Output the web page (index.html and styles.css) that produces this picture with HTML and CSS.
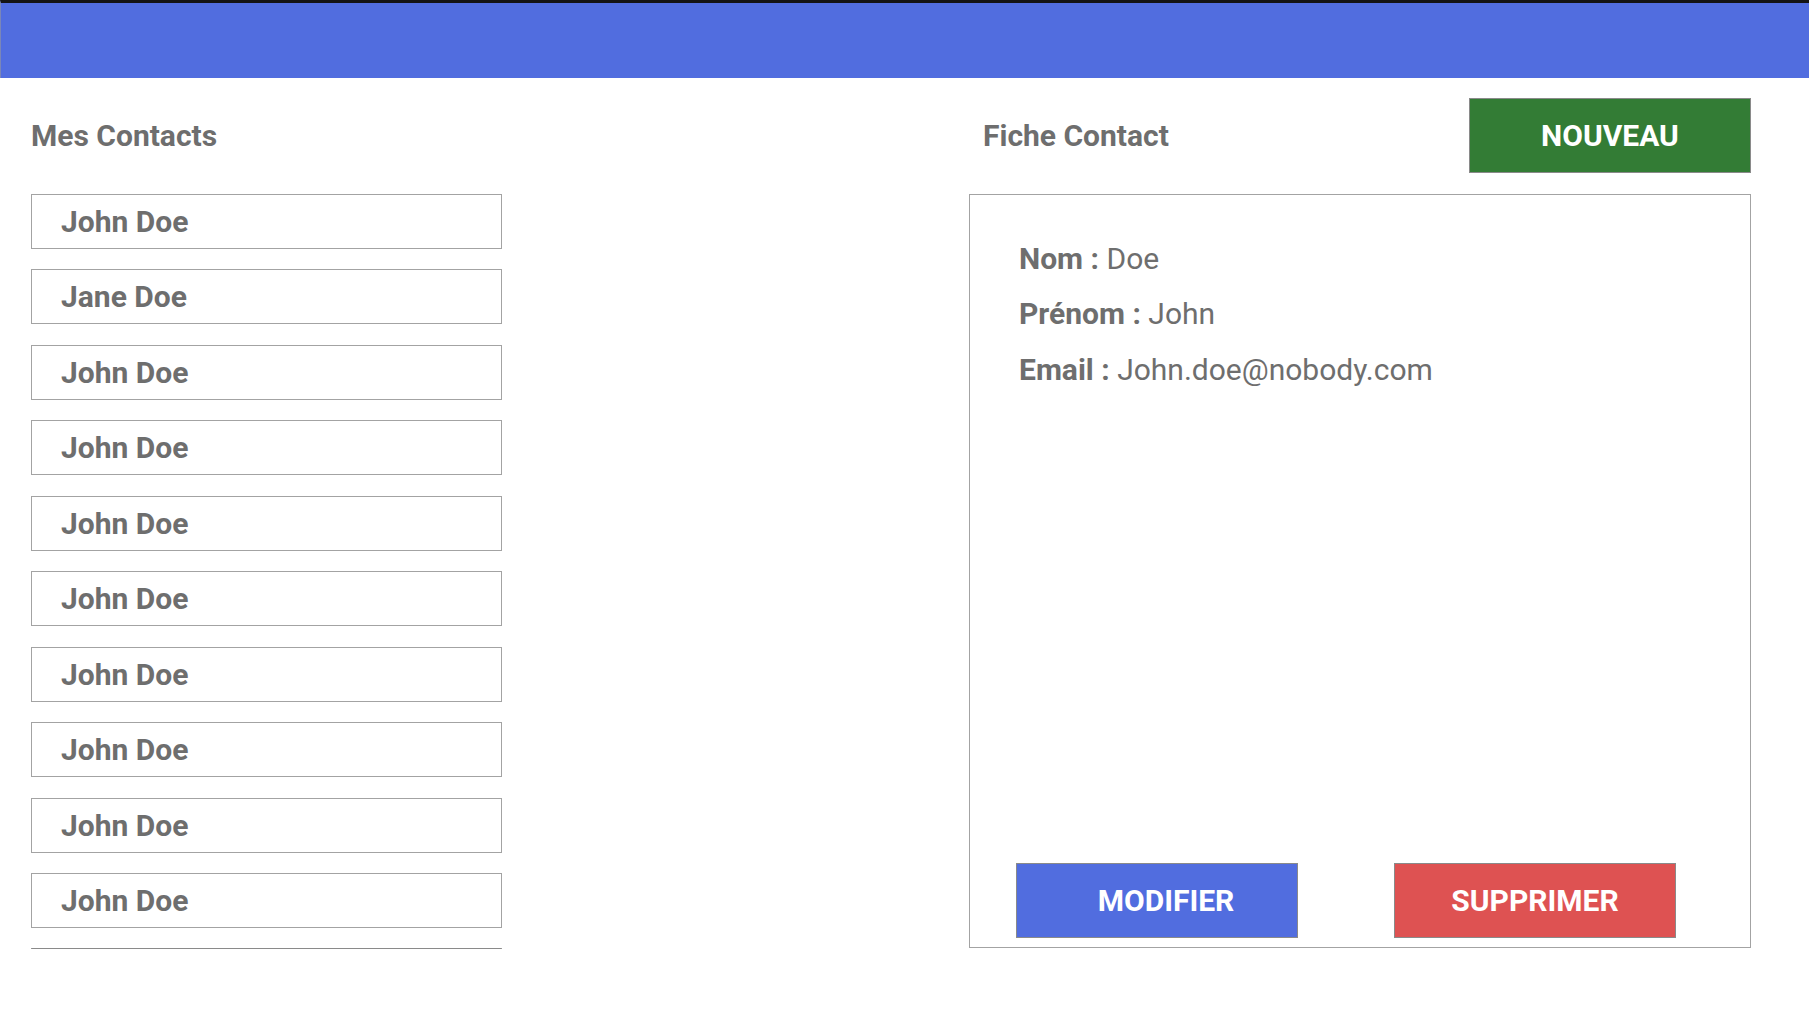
FILE: index.html
```html
<!DOCTYPE html>
<html lang="fr">
<head>
<meta charset="utf-8">
<title>Contacts</title>
<link rel="stylesheet" href="styles.css">
</head>
<body>
<header class="topbar"></header>
<main class="main">
  <section class="col-list">
    <div class="row-head">
      <h2 class="title">Mes Contacts</h2>
    </div>
    <ul class="contact-list">
      <li class="contact">John Doe</li>
      <li class="contact">Jane Doe</li>
      <li class="contact">John Doe</li>
      <li class="contact">John Doe</li>
      <li class="contact">John Doe</li>
      <li class="contact">John Doe</li>
      <li class="contact">John Doe</li>
      <li class="contact">John Doe</li>
      <li class="contact">John Doe</li>
      <li class="contact">John Doe</li>
      <li class="contact contact-next"></li>
    </ul>
  </section>
  <section class="col-detail">
    <div class="row-head detail-head">
      <h2 class="title">Fiche Contact</h2>
      <button class="btn btn-new">NOUVEAU</button>
    </div>
    <div class="card">
      <div class="fields">
        <p class="field"><b>Nom :</b> Doe</p>
        <p class="field"><b>Prénom :</b> John</p>
        <p class="field"><b>Email :</b> John.doe@nobody.com</p>
      </div>
      <div class="actions">
        <button class="btn btn-edit">MODIFIER</button>
        <button class="btn btn-delete">SUPPRIMER</button>
      </div>
    </div>
  </section>
</main>
</body>
</html>
```
FILE: styles.css
```css
html, body {
  margin: 0;
  padding: 0;
  background: #ffffff;
}
body {
  font-family: Roboto, "Liberation Sans", Arial, sans-serif;
  color: #6e6e6e;
  width: 1809px;
  height: 1022px;
  overflow: hidden;
}
.topbar {
  height: 75px;
  background: #516ddf;
  border-top: 3px solid #141414;
  border-left: 1px solid #7a86b8;
  box-sizing: content-box;
}
.main {
  display: flex;
  justify-content: space-between;
  padding: 20px 58px 0 31px;
}
.col-list {
  width: 471px;
}
.col-detail {
  width: 782px;
}
.row-head {
  height: 75px;
  display: flex;
  align-items: center;
  margin-bottom: 21px;
}
.detail-head {
  justify-content: space-between;
  padding-left: 14px;
}
.title {
  margin: 0;
  font-size: 30px;
  font-weight: 700;
  color: #6e6e6e;
}
.contact-list {
  list-style: none;
  margin: 0;
  padding: 0;
  height: 755px;
  overflow: hidden;
  display: flex;
  flex-direction: column;
  gap: 20.44px;
}
.contact {
  flex: none;
  height: 53px;
  line-height: 53px;
  border: 1px solid #a3a3a3;
  padding-left: 29px;
  font-size: 30px;
  font-weight: 700;
  color: #6e6e6e;
}
.contact-next {
  border-top-color: #8a8a8a;
}
.card {
  height: 752px;
  border: 1px solid #a3a3a3;
  display: flex;
  flex-direction: column;
}
.fields {
  padding: 36px 0 0 49px;
}
.field {
  margin: 0;
  height: 55.4px;
  line-height: 55.4px;
  font-size: 30px;
  color: #6e6e6e;
}
.field b {
  font-weight: 700;
}
.actions {
  margin-top: auto;
  display: flex;
  gap: 96px;
  padding: 0 0 9px 46px;
}
.btn {
  width: 282px;
  height: 75px;
  border: 1px solid #8a8a8a;
  color: #ffffff;
  font-family: Roboto, "Liberation Sans", Arial, sans-serif;
  font-size: 30px;
  font-weight: 700;
  padding: 0;
  cursor: pointer;
}
.btn-new {
  background: #337c35;
}
.btn-edit {
  background: #516ddf;
  padding-left: 18px;
}
.btn-delete {
  background: #de5252;
}
```
